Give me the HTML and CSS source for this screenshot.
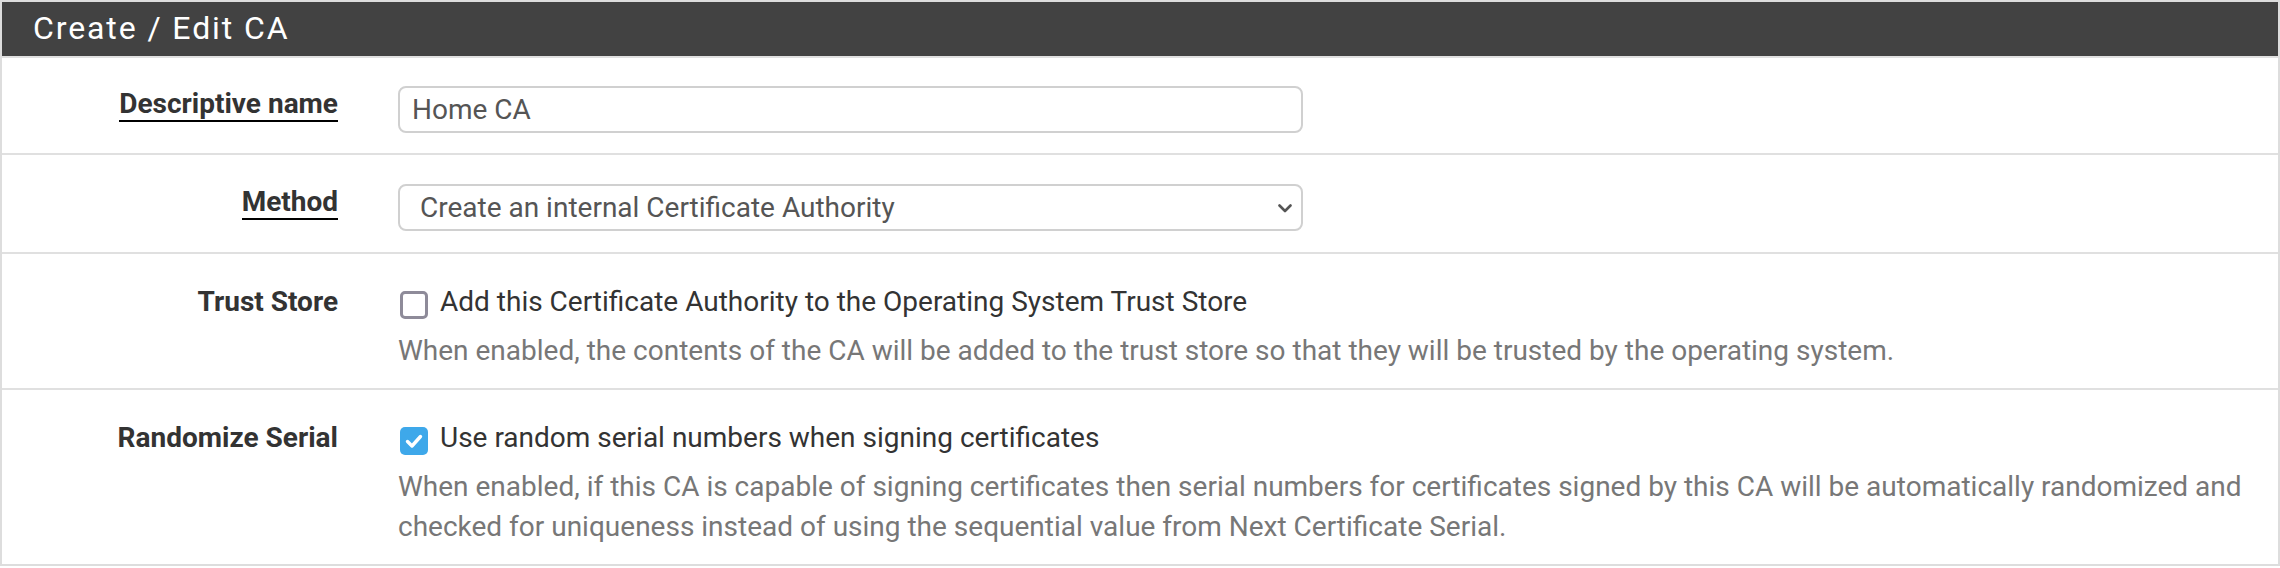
FILE: index.html
```html
<!DOCTYPE html>
<html lang="en">
<head>
<meta charset="utf-8">
<title>Create / Edit CA</title>
<link rel="stylesheet" href="styles.css">
</head>
<body>
<div class="panel">
  <div class="panel-heading">Create / Edit CA</div>
  <div class="row row-input">
    <div class="label"><span class="req">Descriptive name</span></div>
    <div class="control">
      <input class="form-control" type="text" value="Home CA">
    </div>
  </div>
  <div class="row row-input row-select">
    <div class="label"><span class="req">Method</span></div>
    <div class="control">
      <div class="select-wrap">
        <select class="form-control select">
          <option>Create an internal Certificate Authority</option>
        </select>
        <svg class="chevron" width="14" height="9" viewBox="0 0 14 9"><path d="M1.5 1.5 L7 7 L12.5 1.5" fill="none" stroke="#555" stroke-width="2.6" stroke-linecap="round" stroke-linejoin="round"/></svg>
      </div>
    </div>
  </div>
  <div class="row row-check">
    <div class="label">Trust Store</div>
    <div class="control">
      <div class="check-line">
        <span class="check"></span>
        <span class="check-text">Add this Certificate Authority to the Operating System Trust Store</span>
      </div>
      <div class="help">When enabled, the contents of the CA will be added to the trust store so that they will be trusted by the operating system.</div>
    </div>
  </div>
  <div class="row row-check last">
    <div class="label">Randomize Serial</div>
    <div class="control">
      <div class="check-line">
        <span class="check checked"><svg width="28" height="28" viewBox="0 0 28 28"><path d="M7.5 14.5 L12 19 L20.5 9.5" fill="none" stroke="#fff" stroke-width="3.4" stroke-linecap="round" stroke-linejoin="round"/></svg></span>
        <span class="check-text">Use random serial numbers when signing certificates</span>
      </div>
      <div class="help">When enabled, if this CA is capable of signing certificates then serial numbers for certificates signed by this CA will be automatically randomized and checked for uniqueness instead of using the sequential value from Next Certificate Serial.</div>
    </div>
  </div>
</div>
</body>
</html>
```
FILE: styles.css
```css
* { box-sizing: border-box; }
html, body { margin: 0; padding: 0; background: #fff; }
body {
  font-family: Roboto, "Liberation Sans", Arial, sans-serif;
  font-size: 28px;
  line-height: 40px;
  color: #333;
}
.panel {
  border: 2px solid #ddd;
  background: #fff;
}
.panel-heading {
  background: #424242;
  color: #fff;
  font-size: 32px;
  letter-spacing: 1.9px;
  line-height: 52px;
  height: 56px;
  padding: 0 0 4px 31px;
  border-bottom: 2px solid #e0e0e0;
}
.row {
  display: flex;
  align-items: flex-start;
  padding: 28px 17px 20px 0;
  border-bottom: 2px solid #e0e0e0;
}
.row-select { padding-top: 29px; padding-bottom: 21px; }
.row-check { padding-bottom: 17px; }
.row.last { border-bottom: none; }
.label {
  flex: none;
  width: 336px;
  text-align: right;
  font-weight: 700;
  color: #333;
  line-height: 40px;
}
.row-input .label { margin-top: -2px; }
.req {
  border-bottom: 2px solid #000;
}
.control {
  flex: 1;
  margin-left: 60px;
  min-width: 0;
}
.form-control {
  display: block;
  width: 905px;
  height: 47px;
  border: 2px solid #d0d0d0;
  border-radius: 8px;
  padding: 0 12px;
  font-family: inherit;
  font-size: 28px;
  color: #555;
  background: #fff;
  outline: none;
}
.select-wrap {
  position: relative;
  width: 905px;
}
.select {
  -webkit-appearance: none;
  appearance: none;
  padding-left: 20px;
}
.chevron {
  position: absolute;
  right: 11px;
  top: 20px;
  pointer-events: none;
}
.check-line {
  display: flex;
  align-items: flex-start;
}
.check {
  flex: none;
  width: 28px;
  height: 28px;
  margin: 9px 12px 0 2px;
  border: 3px solid #8e8b99;
  border-radius: 5px;
  background: #fff;
}
.check.checked {
  border: none;
  background: #3ea8ea;
}
.check svg { display: block; }
.check-text { color: #333; }
.help {
  margin-top: 9px;
  color: #777;
  line-height: 40px;
}
```
